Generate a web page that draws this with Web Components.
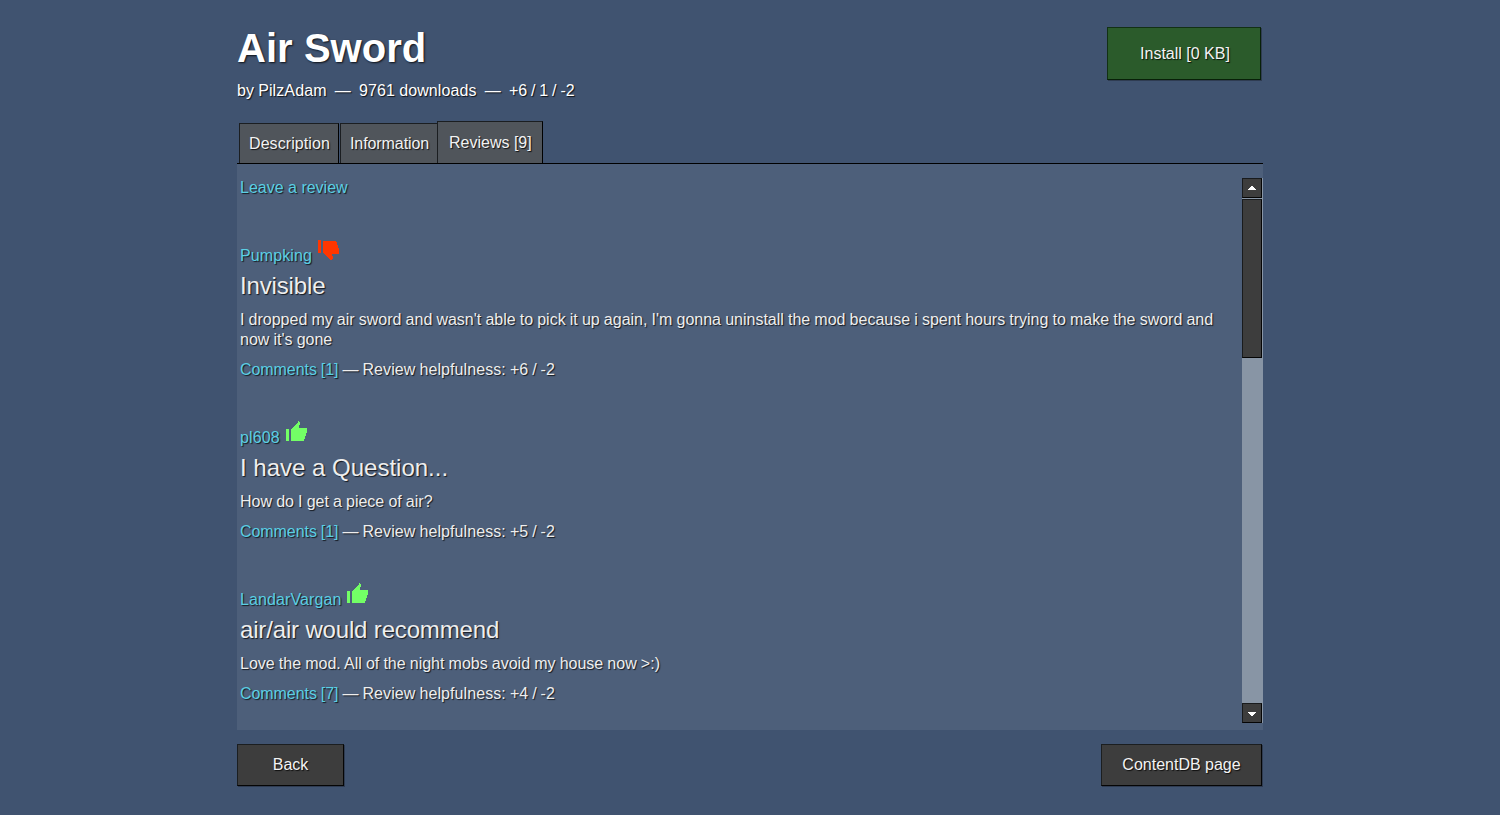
<!DOCTYPE html>
<html lang="en"><head><meta charset="utf-8"><title>Air Sword</title>
<style>html,body{margin:0;height:100%;overflow:hidden}body{background:#405370;font:16px/20px "Liberation Sans",Arial,sans-serif;color:#fff}</style></head><body>
<package-page></package-page>
<script>
const define=(name,css,html)=>customElements.define(name,class extends HTMLElement{
  constructor(){super();this.attachShadow({mode:'open'}).innerHTML=`<style>*{box-sizing:border-box}${css}</style>${typeof html==='function'?html(this):html}`;}
});
define('game-button',`:host{display:block;box-sizing:border-box;background:#3d3d3d;border:1px solid;border-color:#1b1e20 #050505 #050505 #1b1e20;box-shadow:1px 1px 0 #0004;color:#f3f3f3;text-align:center;text-shadow:1px 1px 1px #000c;padding:10px 0 0}
:host([install]){background:#2b5b2b;border-color:#123114 #082008 #082008 #123114;padding:16px 0 0 2px}`,'<slot></slot>');
define('game-tab',`:host{display:block;box-sizing:border-box;height:40px;background:#50555b;border:1px solid #1b1e21;border-right-color:#000;border-bottom:0;padding:10px 0 0 9px;text-shadow:1px 1px 1px #000c;white-space:nowrap;color:#f2f2f2}
:host([active]){height:42px;padding:11px 0 0 11px}`,'<slot></slot>');
define('thumb-icon',`:host{display:block;width:22px;height:21px}svg{display:block}`,el=>el.hasAttribute('down')
 ?'<svg width="22" height="21" fill="#ff3600" shape-rendering="crispEdges"><path d="M0 0h3v13H0zM5 1h13v1h1v3h1v3h1v6h-7v2h1v3h-1v1h-2v-1h-1v-1h-1v-1H9v-1H8v-1H7v-1H6v-1H5z"/></svg>'
 :'<svg width="22" height="21" fill="#73ff66" shape-rendering="crispEdges"><path d="M0 8h3v12H0zM5 8h1V7h1V6h1V5h1V4h1V3h1V2h1V0h1v1h1v3h-1v3h8v5h-1v3h-1v3h-1v2H5z"/></svg>');
define('user-review',`:host{display:block;margin-top:48px;text-shadow:1px 1px 1px #000b;color:#eee}
.n{display:flex;height:20px;color:#5bcfe4;letter-spacing:.1px}thumb-icon{margin:-7px 0 0 6px}thumb-icon[down]{margin-top:-6px}
h2{font-size:24px;line-height:30px;font-weight:400;margin:5px 0 9px;letter-spacing:var(--heading-spacing,0)}p{margin:0 0 10px;word-spacing:-.32px}.c{color:#5bcfe4;letter-spacing:-.06px;word-spacing:-.4px}.h{word-spacing:-.45px}.l{letter-spacing:.08px}`,
 el=>`<div class="n"><span>${el.getAttribute('user')}</span><thumb-icon ${el.getAttribute('vote')}></thumb-icon></div><h2>${el.getAttribute('heading')}</h2><p><slot></slot></p><div class="h"><span class="c">Comments [${el.getAttribute('comments')}]</span> — <span class="l">Review helpfulness: </span>${el.getAttribute('score')}</div>`);
define('scroll-bar',`:host{display:flex;flex-direction:column;width:21px;height:545px;background:#8895a5}
i{display:flex;align-items:center;justify-content:center;width:20px;height:20px;background:#3d3d3d;border:1px solid;border-color:#191b1d #050505 #050505 #191b1d}.t{height:159px;margin-top:1px}.d{margin-top:auto}.d svg{margin-top:1px}`,
 '<i><svg width="8" height="4" fill="#fff" shape-rendering="crispEdges"><path d="M3 0h2v1h1v1h1v1h1v1H0V3h1V2h1V1h1z"/></svg></i><i class="t"></i><i class="d"><svg width="8" height="4" fill="#fff" shape-rendering="crispEdges"><path d="M0 0h8v1H7v1H6v1H5v1H3V3H2V2H1V1H0z"/></svg></i>');
define('package-page',`:host{display:block;width:1026px;margin-left:237px;padding-top:27px}
header{display:flex;justify-content:space-between;height:94px}
h1{font-size:40px;line-height:44px;margin:-1px 0 11px;text-shadow:1px 1px 2px #000c;letter-spacing:.05px}.by{text-shadow:1px 1px 1px #000c;white-space:pre;word-spacing:-.45px;letter-spacing:.1px}.score{word-spacing:-.5px;letter-spacing:-.05px}
.install{width:154px;height:53px;margin-right:2px}
nav{display:flex;align-items:flex-end;height:43px;padding-left:2px;border-bottom:1px solid #000}
main{display:flex;justify-content:space-between;height:566px;background:#4d5f7a;padding:14px 0 0 3px}
.list{width:990px}.leave{color:#5bcfe4;text-shadow:1px 1px 1px #000b}
footer{display:flex;justify-content:space-between;padding:14px 1px 0 0}footer game-button{height:42px}`,
`<header><div><h1>Air Sword</h1><div class="by">by PilzAdam  —  9761 downloads  —  <span class="score">+6 / 1 / -2</span></div></div><game-button install class="install">Install [0 KB]</game-button></header>
<nav><game-tab style="width:100px;letter-spacing:.08px">Description</game-tab><game-tab style="width:97px;margin-left:1px;border-right:0;letter-spacing:-.08px">Information</game-tab><game-tab active style="width:106px">Reviews [9]</game-tab></nav>
<main><div class="list"><div class="leave">Leave a review</div>
<user-review style="--heading-spacing:-.15px" user="Pumpking" vote="down" heading="Invisible" comments="1" score="+6 / -2">I dropped my air sword and wasn't able to pick it up again, I'm gonna uninstall the mod because i spent hours trying to make the sword and now it's gone</user-review>
<user-review user="pl608" vote="up" heading="I have a Question..." comments="1" score="+5 / -2">How do I get a piece of air?</user-review>
<user-review style="--heading-spacing:-.16px" user="LandarVargan" vote="up" heading="air/air would recommend" comments="7" score="+4 / -2">Love the mod. All of the night mobs avoid my house now &gt;:)</user-review>
</div><scroll-bar></scroll-bar></main>
<footer><game-button style="width:107px">Back</game-button><game-button style="width:161px">ContentDB page</game-button></footer>`);
</script></body></html>
